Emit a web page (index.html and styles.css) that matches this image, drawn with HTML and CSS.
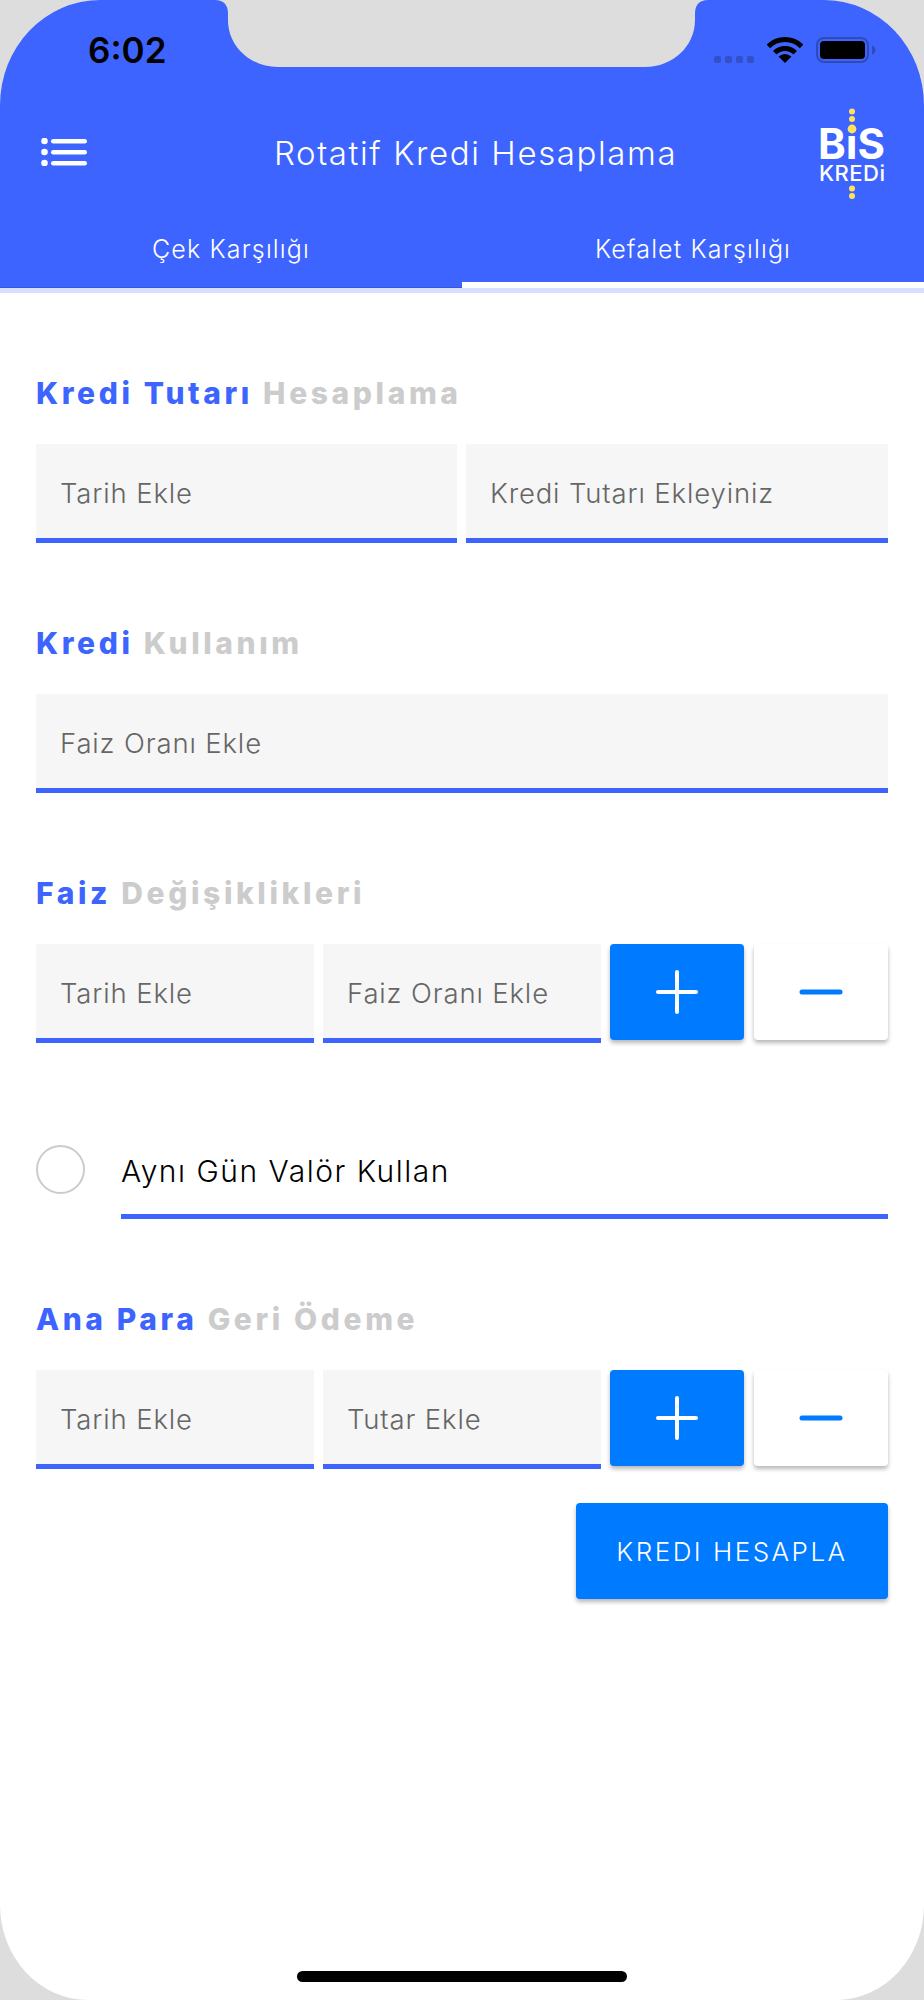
FILE: index.html
```html
<!DOCTYPE html>
<html lang="tr">
<head>
<meta charset="utf-8">
<title>Rotatif Kredi Hesaplama</title>
<link rel="stylesheet" href="styles.css">
</head>
<body>
<div class="screen">
  <header class="header">
    <div class="status">
      <span class="time">6:02</span>
      <div class="status-right">
        <div class="signal"><i></i><i></i><i></i><i></i></div>
        <svg class="wifi" width="36" height="26" viewBox="0 0 36 26"><path d="M1.4 9.4A23.5 23.5 0 0 1 34.6 9.4M7.75 15.75A14.5 14.5 0 0 1 28.25 15.75" fill="none" stroke="#000" stroke-width="5"/><path d="M18 26L11.5 19.5Q18 14.5 24.5 19.5Z" fill="#000"/></svg>
        <svg class="battery" width="60" height="26" viewBox="0 0 60 26"><rect x="1" y="1" width="51" height="24" rx="7" fill="none" stroke="#2f4bb5" stroke-width="2"/><rect x="4" y="4" width="45" height="18" rx="4" fill="#000"/><path d="M56 8.500C58.500 9.500 59.500 11 59.500 13S58.500 16.500 56 17.500Z" fill="#2f4bb5"/></svg>
      </div>
    </div>
    <div class="appbar">
      <svg class="menu" width="46" height="28" viewBox="0 0 46 28"><g fill="#fff"><circle cx="3.500" cy="3" r="3.300"/><circle cx="3.500" cy="14" r="3.300"/><circle cx="3.500" cy="25" r="3.300"/><rect x="10" y="1" width="36" height="4.600" rx="2.300"/><rect x="10" y="12" width="36" height="4.600" rx="2.300"/><rect x="10" y="23" width="36" height="4.600" rx="2.300"/></g></svg>
      <h1 class="title">Rotatif Kredi Hesaplama</h1>
      <svg class="logo" width="68" height="92" viewBox="0 0 68 92"><text x="0" y="51" class="logo-big" textLength="67" lengthAdjust="spacingAndGlyphs">BIS</text><text x="1" y="73" class="logo-small" textLength="66" lengthAdjust="spacing">KREDi</text><rect class="logo-gap" x="28" y="18" width="12" height="10"/><g fill="#ffe25c"><circle cx="34" cy="3.500" r="3"/><circle cx="34" cy="11" r="3"/><circle cx="34" cy="21" r="4.400"/><circle cx="34" cy="80.500" r="3"/><circle cx="34" cy="88" r="3"/></g></svg>
    </div>
    <nav class="tabs">
      <div class="tab">Çek Karşılığı</div>
      <div class="tab tab-active">Kefalet Karşılığı</div>
    </nav>
  </header>
  <div class="tab-band"></div>

  <main class="content">
    <h2 class="heading"><b>Kredi Tutarı</b> <span>Hesaplama</span></h2>
    <div class="row row-half">
      <div class="field">Tarih Ekle</div>
      <div class="field">Kredi Tutarı Ekleyiniz</div>
    </div>

    <h2 class="heading next"><b>Kredi</b> <span>Kullanım</span></h2>
    <div class="row">
      <div class="field">Faiz Oranı Ekle</div>
    </div>

    <h2 class="heading next"><b>Faiz</b> <span>Değişiklikleri</span></h2>
    <div class="row">
      <div class="field">Tarih Ekle</div>
      <div class="field">Faiz Oranı Ekle</div>
      <div class="actions">
        <button class="btn btn-primary" type="button"><svg width="44" height="44" viewBox="0 0 44 44"><path d="M22 2V42M3 22H41" stroke="#fff" stroke-width="4" stroke-linecap="round"/></svg></button>
        <button class="btn btn-light" type="button"><svg width="44" height="44" viewBox="0 0 44 44"><path d="M3 22H41" stroke="#007aff" stroke-width="5" stroke-linecap="round"/></svg></button>
      </div>
    </div>

    <div class="check">
      <span class="radio"></span>
      <div class="check-label">Aynı Gün Valör Kullan</div>
    </div>

    <h2 class="heading next"><b>Ana Para</b> <span>Geri Ödeme</span></h2>
    <div class="row">
      <div class="field">Tarih Ekle</div>
      <div class="field">Tutar Ekle</div>
      <div class="actions">
        <button class="btn btn-primary" type="button"><svg width="44" height="44" viewBox="0 0 44 44"><path d="M22 2V42M3 22H41" stroke="#fff" stroke-width="4" stroke-linecap="round"/></svg></button>
        <button class="btn btn-light" type="button"><svg width="44" height="44" viewBox="0 0 44 44"><path d="M3 22H41" stroke="#007aff" stroke-width="5" stroke-linecap="round"/></svg></button>
      </div>
    </div>

    <button class="submit" type="button">KREDI HESAPLA</button>
  </main>

  <svg class="notch" width="924" height="68" viewBox="0 0 924 68"><path d="M215 0Q228 0 228 14V20C228 46 250 67 278 67H645C673 67 695 46 695 20V14Q695 0 708 0Z" fill="#dddddd"/></svg>
  <div class="home-bar"></div>
</div>
</body>
</html>
```

FILE: styles.css
```css
* { box-sizing: border-box; }
html, body { margin: 0; padding: 0; background: #ddd; }
body { font-family: Inter, "Open Sans", "Liberation Sans", sans-serif; }

.screen {
  position: relative;
  width: 924px;
  height: 2000px;
  overflow: hidden;
  background: #fff;
  border-radius: 100px 100px 88px 88px / 105px 105px 95px 95px;
}

/* header */
.header { background: #3e64ff; color: #fff; height: 288px; }
.status {
  height: 84px;
  padding: 37px 48px 0 88px;
  display: flex;
  justify-content: space-between;
  align-items: flex-start;
}
.time { font-size: 35px; font-weight: 600; line-height: 26px; color: #000; }
.status-right { display: flex; align-items: flex-start; }
.signal { display: flex; gap: 4px; margin: 19px 13px 0 0; }
.signal i { display: block; width: 7px; height: 7px; border-radius: 2px; background: #3350c8; }
.wifi { margin-right: 13px; }

.appbar {
  height: 136px;
  padding: 0 38px 0 41px;
  display: flex;
  align-items: center;
  justify-content: space-between;
}
.title { margin: 2px 0 0 46px; font-size: 33px; font-weight: 300; letter-spacing: 1.600px; line-height: 42px; }
.logo { margin-top: 4px; }
.logo-big { font-family: Inter, sans-serif; font-weight: 700; font-size: 42px; fill: #fff; }
.logo-small { font-family: Inter, sans-serif; font-weight: 500; font-size: 22px; fill: #fff; }
.logo-gap { fill: #3e64ff; }

.tabs { display: flex; height: 68px; }
.tab {
  flex: 1;
  display: flex;
  justify-content: center;
  padding-top: 13px;
  font-size: 25px;
  font-weight: 300;
  letter-spacing: 1.150px;
  line-height: 32px;
  border-bottom: 1px solid #3558d8;
}
.tab-active { border-bottom: 6px solid #fff; }
.tab-band { height: 5px; background: #d6dffe; }

/* form */
.content { padding: 80px 36px 0; display: flex; flex-direction: column; }
.heading {
  margin: 0 0 31px;
  height: 40px;
  font-size: 30px;
  line-height: 40px;
  font-weight: 800;
  letter-spacing: 3.600px;
}
.heading b { color: #3e64ff; font-weight: 800; }
.heading span { color: #ccc; }
.heading.next { margin-top: 80px; }

.row { display: flex; gap: 9px; }
.row-half .field:first-child { flex: 0 0 421px; }
.field {
  flex: 1;
  height: 99px;
  padding: 3px 24px 0;
  display: flex;
  align-items: center;
  background: #f6f6f6;
  border-bottom: 5px solid #3e64ff;
  color: #666;
  font-size: 27.500px;
  font-weight: 300;
  letter-spacing: .850px;
}
.actions { display: flex; gap: 10px; }
.btn {
  width: 134px;
  height: 96px;
  padding: 0;
  border: 0;
  border-radius: 4px;
  display: flex;
  align-items: center;
  justify-content: center;
  box-shadow: 0 3px 4px rgba(0, 0, 0, .28);
}
.btn-primary { background: #007aff; }
.btn-light { background: #fff; }

.check { display: flex; margin-top: 102px; }
.radio {
  flex: none;
  width: 49px;
  height: 49px;
  border: 2px solid #ccc;
  border-radius: 50%;
}
.check-label {
  flex: 1;
  height: 74px;
  margin-left: 36px;
  padding-top: 6px;
  border-bottom: 5px solid #3e64ff;
  color: #000;
  font-size: 30px;
  font-weight: 300;
  letter-spacing: 1.500px;
  line-height: 40px;
}

.submit {
  align-self: flex-end;
  width: 312px;
  height: 96px;
  margin-top: 34px;
  border: 0;
  border-radius: 4px;
  background: #007aff;
  color: #fff;
  font-family: inherit;
  font-size: 26px;
  font-weight: 300;
  letter-spacing: 2.500px;
  box-shadow: 0 3px 4px rgba(0, 0, 0, .28);
}

/* overlays */
.notch { position: absolute; left: 0; top: 0; }
.home-bar {
  position: absolute;
  left: 297px;
  top: 1971px;
  width: 330px;
  height: 11px;
  border-radius: 6px;
  background: #000;
}
```
